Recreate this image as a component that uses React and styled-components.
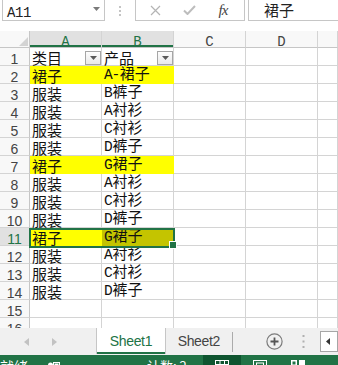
import React from 'react';
import styled, { createGlobalStyle } from 'styled-components';

const GREEN = '#217346';
const GRID = '#d4d4d4';
const HEAD_LINE = '#c6c6c6';

const GlobalStyle = createGlobalStyle`
  html, body { margin: 0; padding: 0; background: #fff; }
  body { width: 338px; height: 365px; overflow: hidden; }
  * { box-sizing: border-box; }
`;

const Window = styled.div`
  width: 338px;
  height: 365px;
  overflow: hidden;
  display: flex;
  flex-direction: column;
  background: #fff;
  font-family: "Noto Sans CJK SC", sans-serif;
`;

/* ---------- formula bar ---------- */
const FormulaBar = styled.div`
  display: flex;
  height: 21px;
  flex-shrink: 0;
  margin-bottom: 10px;
`;
const NameBox = styled.div`
  width: 103px;
  margin-left: 2px;
  border: 1px solid ${HEAD_LINE};
  border-top: none;
  display: flex;
  justify-content: space-between;
  align-items: flex-start;
  padding: 0 4px;
`;
const NameText = styled.span`
  margin-top: 5px;
  font: 14px/16px "Liberation Mono", monospace;
  letter-spacing: -0.4px;
  color: #222;
`;
const NameArrow = styled.svg`
  margin-top: 7px;
`;
const Grip = styled.div`
  width: 30px;
  display: flex;
  flex-direction: column;
  align-items: center;
  justify-content: center;
  gap: 2px;
  padding-top: 1px;
  span { width: 2px; height: 2px; background: #c4c4c4; }
`;
const FxBox = styled.div`
  width: 110px;
  border: 1px solid ${HEAD_LINE};
  border-top: none;
  display: flex;
  align-items: center;
  padding-left: 2px;
`;
const FxSlot = styled.div`
  width: 34px;
  display: flex;
  justify-content: center;
  align-items: center;
`;
const FxText = styled.span`
  font: italic 15px "Liberation Serif", serif;
  color: #444;
  letter-spacing: -1px;
`;
const FormulaInput = styled.div`
  flex: 1;
  margin-left: 3px;
  border-left: 1px solid ${HEAD_LINE};
  border-bottom: 1px solid ${HEAD_LINE};
  padding-left: 15px;
  display: flex;
  align-items: center;
  font-size: 15px;
  line-height: 20px;
  color: #222;
`;

/* ---------- sheet grid ---------- */
const Sheet = styled.div`
  position: relative;
  height: 297px;
  flex-shrink: 0;
  overflow: hidden;
`;
const Row = styled.div`
  display: flex;
  height: ${p => p.$h}px;
`;
const Corner = styled.div`
  width: 30px;
  border-right: 1px solid ${HEAD_LINE};
  border-bottom: 1px solid ${HEAD_LINE};
  background: #f8f8f8;
  display: flex;
  justify-content: flex-end;
  align-items: flex-end;
  padding: 0 1px 1px 0;
`;
const ColHead = styled.div`
  width: ${p => (p.$w ? `${p.$w}px` : 'auto')};
  flex: ${p => (p.$w ? '0 0 auto' : '1')};
  border-right: 1px solid ${GRID};
  border-bottom: 1px solid ${HEAD_LINE};
  background: ${p => (p.$sel ? '#e1e1e1' : '#f8f8f8')};
  box-shadow: ${p => (p.$sel ? `inset 0 -2px 0 ${GREEN}` : 'none')};
  color: ${p => (p.$sel ? GREEN : '#444')};
  display: flex;
  justify-content: center;
  align-items: flex-end;
  font: 14px/10px "Liberation Mono", monospace;
`;
const RowHead = styled.div`
  width: 30px;
  flex-shrink: 0;
  border-right: 1px solid ${HEAD_LINE};
  border-bottom: 1px solid ${GRID};
  background: ${p => (p.$sel ? '#e1e1e1' : '#f8f8f8')};
  color: ${p => (p.$sel ? GREEN : '#444')};
  display: flex;
  justify-content: center;
  align-items: flex-end;
  font: 14px/12px "Liberation Sans", sans-serif;
`;
const Cell = styled.div`
  position: relative;
  width: ${p => (p.$w ? `${p.$w}px` : 'auto')};
  flex: ${p => (p.$w ? '0 0 auto' : '1')};
  border-right: 1px solid ${p => p.$fill || GRID};
  border-bottom: 1px solid ${p => p.$fill || GRID};
  background: ${p => p.$fill || '#fff'};
  display: flex;
  align-items: flex-end;
  padding-left: 2px;
  color: #111;
  white-space: nowrap;
`;
const Value = styled.span`
  font-size: 15px;
  line-height: 15px;
`;
const Latin = styled.span`
  font-family: "Liberation Mono", monospace;
  font-size: 14.5px;
  letter-spacing: -1.3px;
  margin-right: 1px;
`;
const FilterButton = styled.div`
  position: absolute;
  right: 0;
  bottom: 0;
  width: 16px;
  height: 14px;
  border: 1px solid #a6a6a6;
  background: linear-gradient(#fdfdfd, #e9e9e9);
  display: flex;
  align-items: center;
  justify-content: center;
`;
const Selection = styled.div`
  position: absolute;
  left: 29px;
  top: 197px;
  width: 146px;
  height: 20px;
  border: 2px solid ${GREEN};
  pointer-events: none;
`;
const FillHandle = styled.div`
  position: absolute;
  right: -4px;
  bottom: -3px;
  width: 6px;
  height: 6px;
  box-sizing: content-box;
  background: ${GREEN};
  border: 1px solid #fff;
`;

/* ---------- sheet tabs ---------- */
const TabBar = styled.div`
  display: flex;
  height: 27px;
  flex-shrink: 0;
  background: #f0f0f0;
  font: 14px "Liberation Sans", sans-serif;
`;
const TabNav = styled.div`
  width: 97px;
  display: flex;
  align-items: center;
  gap: 23px;
  padding-left: 24px;
`;
const Tab = styled.div`
  width: ${p => p.$w}px;
  margin-bottom: 1px;
  display: flex;
  align-items: center;
  justify-content: center;
  letter-spacing: -0.35px;
  color: ${p => (p.$active ? GREEN : '#444')};
  background: ${p => (p.$active ? '#fff' : 'transparent')};
  border-left: ${p => (p.$active ? `1px solid ${HEAD_LINE}` : 'none')};
  border-right: ${p => (p.$active ? `1px solid ${HEAD_LINE}` : 'none')};
  box-shadow: ${p => (p.$active ? `inset 0 -2px 0 ${GREEN}` : 'none')};
`;
const TabDivider = styled.div`
  width: 1px;
  height: 20px;
  align-self: center;
  background: #ababab;
`;
const BarIcon = styled.svg`
  align-self: center;
  margin-left: ${p => p.$ml}px;
  flex-shrink: 0;
`;
const ScrollBox = styled.div`
  width: 18px;
  height: 21px;
  align-self: center;
  margin-left: 15px;
  flex-shrink: 0;
  border: 1px solid #a6a6a6;
  background: #fff;
  display: flex;
  align-items: center;
  padding-left: 5px;
`;

/* ---------- status bar ---------- */
const StatusBar = styled.div`
  height: 22px;
  flex-shrink: 0;
  background: ${GREEN};
  color: #fff;
  display: flex;
  align-items: center;
  font-size: 14px;
  line-height: 22px;
`;
const StatusText = styled.span`
  width: ${p => p.$w}px;
  margin-left: ${p => p.$ml || 0}px;
  font-size: ${p => p.$size || 14}px;
  flex-shrink: 0;
`;
const ViewButton = styled.div`
  width: 38px;
  height: 22px;
  flex-shrink: 0;
  display: flex;
  justify-content: center;
  align-items: center;
  background: ${p => (p.$active ? '#0f5530' : 'transparent')};
`;

const rows = [
  ['类目', '产品'],
  ['裙子', 'A-裙子', true],
  ['服装', 'B裤子'],
  ['服装', 'A衬衫'],
  ['服装', 'C衬衫'],
  ['服装', 'D裤子'],
  ['裙子', 'G裙子', true],
  ['服装', 'A衬衫'],
  ['服装', 'C衬衫'],
  ['服装', 'D裤子'],
  ['裙子', 'G裙子', true],
  ['服装', 'A衬衫'],
  ['服装', 'C衬衫'],
  ['服装', 'D裤子'],
  ['', ''],
  ['', ''],
];

function CellText({ text }) {
  if (!text) return null;
  return (
    <Value>
      {text.split(/([A-Za-z0-9-]+)/).filter(Boolean).map((part, i) =>
        /[A-Za-z0-9-]/.test(part) ? <Latin key={i}>{part}</Latin> : part
      )}
    </Value>
  );
}

function Filter() {
  return (
    <FilterButton>
      <svg width="7" height="4" viewBox="0 0 7 4"><path d="M0 0h7L3.5 4z" fill="#595959" /></svg>
    </FilterButton>
  );
}

export default function App() {
  return (
    <Window>
      <GlobalStyle />
      <FormulaBar>
        <NameBox>
          <NameText>A11</NameText>
          <NameArrow width="7" height="4" viewBox="0 0 7 4"><path d="M0 0h7L3.5 4z" fill="#7a7a7a" /></NameArrow>
        </NameBox>
        <Grip><span /><span /><span /></Grip>
        <FxBox>
          <FxSlot>
            <svg width="11" height="11" viewBox="0 0 11 11"><path d="M1 1l9 9M10 1l-9 9" stroke="#b4b4b4" strokeWidth="1.2" fill="none" /></svg>
          </FxSlot>
          <FxSlot>
            <svg width="13" height="10" viewBox="0 0 13 10"><path d="M1 5.5l3.5 3.5L12 1" stroke="#bdbdbd" strokeWidth="2" fill="none" /></svg>
          </FxSlot>
          <FxSlot><FxText>fx</FxText></FxSlot>
        </FxBox>
        <FormulaInput>裙子</FormulaInput>
      </FormulaBar>

      <Sheet>
        <Row $h={17}>
          <Corner>
            <svg width="9" height="9" viewBox="0 0 9 9"><path d="M9 0v9H0z" fill="#d3d3d3" /></svg>
          </Corner>
          <ColHead $w={72} $sel>A</ColHead>
          <ColHead $w={72} $sel>B</ColHead>
          <ColHead $w={72}>C</ColHead>
          <ColHead $w={72}>D</ColHead>
          <ColHead />
        </Row>
        {rows.map(([a, b, hl], i) => {
          const n = i + 1;
          const sel = n === 11;
          const fill = hl ? '#ffff00' : null;
          return (
            <Row $h={18} key={n}>
              <RowHead $sel={sel}>{n}</RowHead>
              <Cell $w={72} $fill={fill}>
                <CellText text={a} />
                {n === 1 && <Filter />}
              </Cell>
              <Cell $w={72} $fill={sel ? '#c4c400' : fill}>
                <CellText text={b} />
                {n === 1 && <Filter />}
              </Cell>
              <Cell $w={72} />
              <Cell $w={72} />
              <Cell />
            </Row>
          );
        })}
        <Selection><FillHandle /></Selection>
      </Sheet>

      <TabBar>
        <TabNav>
          <svg width="5" height="8" viewBox="0 0 5 8"><path d="M5 0v8L0 4z" fill="#c2c2c2" /></svg>
          <svg width="5" height="8" viewBox="0 0 5 8"><path d="M0 0v8l5-4z" fill="#c2c2c2" /></svg>
        </TabNav>
        <Tab $w={70} $active>Sheet1</Tab>
        <Tab $w={67}>Sheet2</Tab>
        <TabDivider />
        <BarIcon $ml={33} width="17" height="17" viewBox="0 0 17 17">
          <circle cx="8.5" cy="8.5" r="7.6" fill="none" stroke="#7b7b7b" strokeWidth="1.2" />
          <path d="M8.5 4.5v8M4.5 8.5h8" stroke="#555" strokeWidth="1.8" />
        </BarIcon>
        <BarIcon $ml={19} width="3" height="13" viewBox="0 0 3 13">
          <rect x="0.5" y="0" width="2" height="2" fill="#b0b0b0" />
          <rect x="0.5" y="5.5" width="2" height="2" fill="#b0b0b0" />
          <rect x="0.5" y="11" width="2" height="2" fill="#b0b0b0" />
        </BarIcon>
        <ScrollBox>
          <svg width="4" height="7" viewBox="0 0 4 7"><path d="M4 0v7L0 3.5z" fill="#333" /></svg>
        </ScrollBox>
      </TabBar>

      <StatusBar>
        <StatusText $w={28}>就绪</StatusText>
        <BarIcon $ml={20} width="12" height="9" viewBox="0 0 12 9">
          <circle cx="2.5" cy="3" r="2.5" fill="#fff" />
          <rect x="5.5" y="0.5" width="6" height="8" fill="none" stroke="#fff" />
          <rect x="6.5" y="1.5" width="4" height="2" fill="#fff" />
        </BarIcon>
        <StatusText $w={56} $ml={87} $size={13}>计数: 2</StatusText>
        <ViewButton $active>
          <svg width="14" height="12" viewBox="0 0 14 12">
            <rect x="0.5" y="0.5" width="13" height="11" fill="none" stroke="#fff" />
            <path d="M5 0.5v11M9.5 0.5v11M0.5 4.5h13M0.5 8h13" stroke="#fff" />
          </svg>
        </ViewButton>
        <ViewButton>
          <svg width="14" height="12" viewBox="0 0 14 12">
            <rect x="0.5" y="0.5" width="13" height="11" fill="none" stroke="#fff" />
            <rect x="3.5" y="3" width="7" height="9" fill="none" stroke="#fff" />
          </svg>
        </ViewButton>
        <ViewButton>
          <svg width="14" height="12" viewBox="0 0 14 12">
            <rect x="0" y="0" width="6" height="12" fill="#fff" />
            <rect x="8" y="0" width="6" height="12" fill="#fff" />
            <rect x="1.5" y="1.5" width="3" height="3" fill="#217346" />
          </svg>
        </ViewButton>
      </StatusBar>
    </Window>
  );
}
